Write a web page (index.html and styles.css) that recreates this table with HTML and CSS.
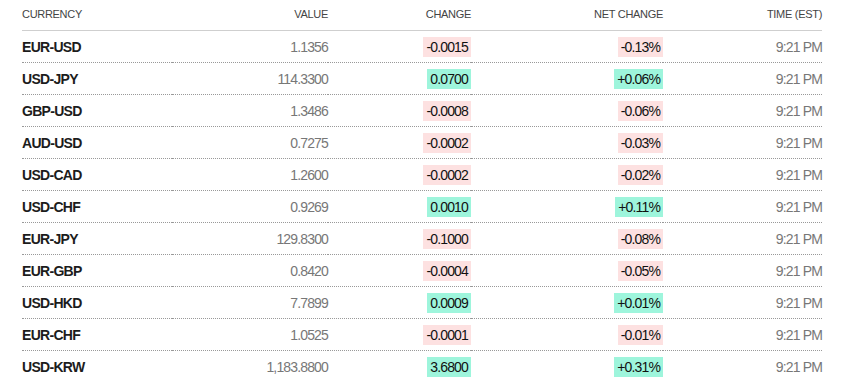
FILE: index.html
```html
<!DOCTYPE html>
<html lang="en">
<head>
    <meta charset="UTF-8">
    <title>Currencies</title>
    <link rel="stylesheet" href="styles.css">
</head>
<body>
<table class="fx-table">
    <thead>
        <tr>
            <th class="col-name">Currency</th>
            <th class="col-value">Value</th>
            <th class="col-change">Change</th>
            <th class="col-net">Net Change</th>
            <th class="col-time">Time (EST)</th>
        </tr>
    </thead>
    <tbody>
        <tr><td class="col-name">EUR-USD</td><td class="col-value">1.1356</td><td class="col-change"><span class="pill down">-0.0015</span></td><td class="col-net"><span class="pill down">-0.13%</span></td><td class="col-time">9:21 PM</td></tr>
        <tr><td class="col-name">USD-JPY</td><td class="col-value">114.3300</td><td class="col-change"><span class="pill up">0.0700</span></td><td class="col-net"><span class="pill up">+0.06%</span></td><td class="col-time">9:21 PM</td></tr>
        <tr><td class="col-name">GBP-USD</td><td class="col-value">1.3486</td><td class="col-change"><span class="pill down">-0.0008</span></td><td class="col-net"><span class="pill down">-0.06%</span></td><td class="col-time">9:21 PM</td></tr>
        <tr><td class="col-name">AUD-USD</td><td class="col-value">0.7275</td><td class="col-change"><span class="pill down">-0.0002</span></td><td class="col-net"><span class="pill down">-0.03%</span></td><td class="col-time">9:21 PM</td></tr>
        <tr><td class="col-name">USD-CAD</td><td class="col-value">1.2600</td><td class="col-change"><span class="pill down">-0.0002</span></td><td class="col-net"><span class="pill down">-0.02%</span></td><td class="col-time">9:21 PM</td></tr>
        <tr><td class="col-name">USD-CHF</td><td class="col-value">0.9269</td><td class="col-change"><span class="pill up">0.0010</span></td><td class="col-net"><span class="pill up">+0.11%</span></td><td class="col-time">9:21 PM</td></tr>
        <tr><td class="col-name">EUR-JPY</td><td class="col-value">129.8300</td><td class="col-change"><span class="pill down">-0.1000</span></td><td class="col-net"><span class="pill down">-0.08%</span></td><td class="col-time">9:21 PM</td></tr>
        <tr><td class="col-name">EUR-GBP</td><td class="col-value">0.8420</td><td class="col-change"><span class="pill down">-0.0004</span></td><td class="col-net"><span class="pill down">-0.05%</span></td><td class="col-time">9:21 PM</td></tr>
        <tr><td class="col-name">USD-HKD</td><td class="col-value">7.7899</td><td class="col-change"><span class="pill up">0.0009</span></td><td class="col-net"><span class="pill up">+0.01%</span></td><td class="col-time">9:21 PM</td></tr>
        <tr><td class="col-name">EUR-CHF</td><td class="col-value">1.0525</td><td class="col-change"><span class="pill down">-0.0001</span></td><td class="col-net"><span class="pill down">-0.01%</span></td><td class="col-time">9:21 PM</td></tr>
        <tr><td class="col-name">USD-KRW</td><td class="col-value">1,183.8800</td><td class="col-change"><span class="pill up">3.6800</span></td><td class="col-net"><span class="pill up">+0.31%</span></td><td class="col-time">9:21 PM</td></tr>
    </tbody>
</table>
</body>
</html>
```

FILE: styles.css
```css
/* Global */
body {
    margin: 0;
    padding: 0 23px 0 22px;
    background-color: #fff;
    font-family: 'Liberation Sans', Arial, sans-serif;
    color: #222;
}

/* Table */
.fx-table {
    width: 800px;
    border-collapse: collapse;
    table-layout: fixed;
}

.fx-table th {
    height: 28px;
    padding: 0 0 2px 0;
    font-size: 11px;
    font-weight: normal;
    text-transform: uppercase;
    letter-spacing: -0.3px;
    color: #444;
    border-bottom: 1px solid #cfcfcf;
    vertical-align: middle;
}

.fx-table td {
    height: 31px;
    padding: 0;
    font-size: 14px;
    letter-spacing: -0.85px;
    color: #777;
    border-bottom: 1px dotted #999;
    vertical-align: middle;
}

.fx-table tbody tr:last-child td {
    border-bottom: none;
}

/* Columns */
.col-name {
    width: 150px;
    text-align: left;
}

td.col-name {
    font-weight: bold;
    color: #1c1c1c;
    letter-spacing: -0.7px;
}

.col-value {
    width: 156px;
    text-align: right;
}

.col-change {
    width: 143px;
    text-align: right;
}

.col-net {
    width: 192px;
    text-align: right;
}

.col-time {
    width: 159px;
    text-align: right;
}

/* Change badges */
.pill {
    display: inline-block;
    height: 20px;
    line-height: 20px;
    padding: 0 3px;
    color: #111;
}

.pill.down {
    background-color: #fde1e1;
}

.pill.up {
    background-color: #9ef5dc;
}
```
